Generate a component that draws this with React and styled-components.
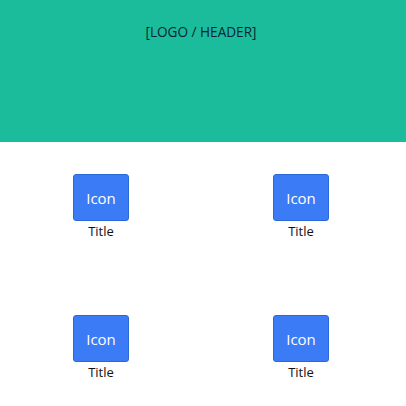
import React from "react";
import styled, { createGlobalStyle } from "styled-components";

const Global = createGlobalStyle`
  html, body { margin: 0; padding: 0; background: #fff; }
  body { font-family: "Open Sans", "Noto Sans", sans-serif; }
`;

const HeaderWrap = styled.div`
  background: #1abc9c;
`;

const Header = styled.header`
  height: 142px;
  width: 402px;
  box-sizing: border-box;
  padding-top: 22px;
  display: flex;
  justify-content: center;
`;

const HeaderText = styled.div`
  font-size: 13.6px;
  color: #0b2433;
  line-height: 20px;
`;

const Grid = styled.div`
  display: grid;
  grid-template-columns: 200px 200px;
  grid-auto-rows: 141px;
  width: 400px;
  margin-left: 1px;
`;

const Item = styled.div`
  display: flex;
  flex-direction: column;
  align-items: center;
  padding-top: 32px;
`;

const IconBox = styled.div`
  width: 56px;
  height: 47px;
  box-sizing: border-box;
  background: #3b7cf6;
  border: 1px solid #2b67d6;
  border-radius: 3px;
  color: #fff;
  font-size: 15px;
  display: flex;
  align-items: center;
  justify-content: center;
`;

const Title = styled.div`
  font-size: 13px;
  color: #111;
  line-height: 20px;
`;

const items = ["Title", "Title", "Title", "Title"];

export default function App() {
  return (
    <>
      <Global />
      <HeaderWrap>
        <Header>
          <HeaderText>[LOGO / HEADER]</HeaderText>
        </Header>
      </HeaderWrap>
      <Grid>
        {items.map((t, i) => (
          <Item key={i}>
            <IconBox>Icon</IconBox>
            <Title>{t}</Title>
          </Item>
        ))}
      </Grid>
    </>
  );
}
